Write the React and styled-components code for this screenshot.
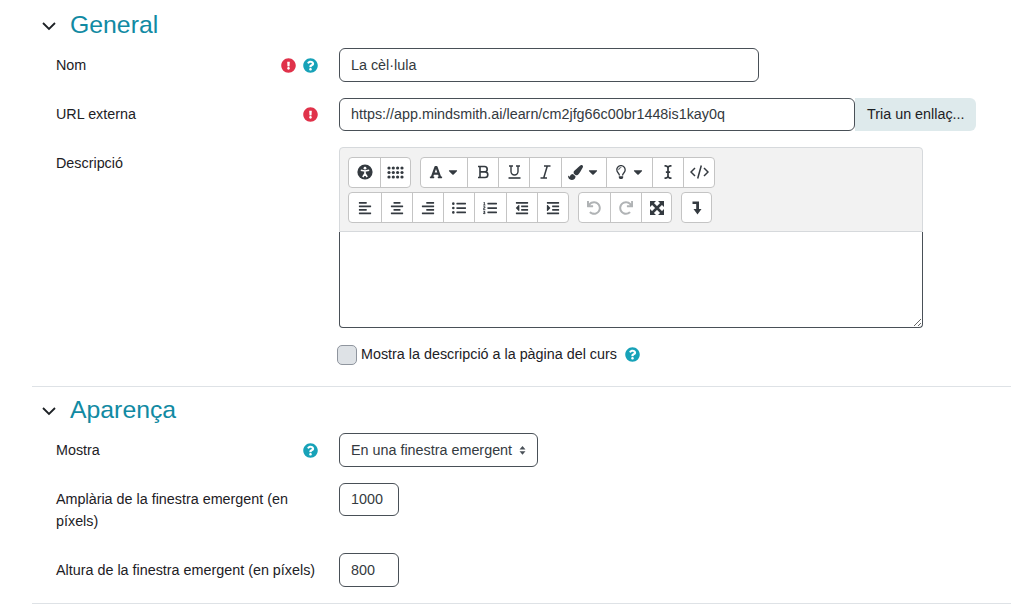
import styled, { createGlobalStyle } from 'styled-components';
import {
  FaFont,
  FaPaintBrush,
  FaRegLightbulb,
  FaICursor,
  FaAlignLeft,
  FaAlignCenter,
  FaAlignRight,
  FaListUl,
  FaListOl,
  FaOutdent,
  FaIndent,
  FaUndo,
  FaRedo,
  FaCaretDown,
  FaExclamationCircle,
  FaQuestionCircle,
} from 'react-icons/fa';

const GlobalStyle = createGlobalStyle`
  html, body {
    margin: 0;
    padding: 0;
    background: #fff;
    overflow: hidden;
  }
  body {
    font-family: "Liberation Sans", Arial, sans-serif;
    font-size: 14.35px;
    line-height: 21.6px;
    color: #1d2125;
  }
`;

const Required = () => (
  <RedIcon>
    <FaExclamationCircle />
  </RedIcon>
);

const Help = () => (
  <TealIcon>
    <FaQuestionCircle />
  </TealIcon>
);

const SectionChevron = () => (
  <Chevron viewBox="0 0 14 14">
    <path d="M1 4 L7 10 L13 4" />
  </Chevron>
);

const AccessIcon = () => (
  <svg width="16" height="16" viewBox="0 0 16 16">
    <circle cx="8" cy="8" r="7.6" fill="currentColor" />
    <circle cx="8" cy="4.2" r="1.4" fill="#fff" />
    <path d="M3.8 6.2 L8 7 L12.2 6.2 M8 7 V9.5 L5.8 13 M8 9.5 L10.2 13" fill="none" stroke="#fff" strokeWidth="1.6" />
  </svg>
);

const DotsIcon = () => (
  <svg width="17" height="13" viewBox="0 0 17 13" fill="currentColor">
    {[2, 6.5, 11].map((y) =>
      [2, 6.3, 10.6, 15].map((x) => <circle key={`${x}-${y}`} cx={x} cy={y} r="1.6" />)
    )}
  </svg>
);

const BoldIcon = () => (
  <svg width="13" height="14" viewBox="0 0 13 14" fill="none" stroke="currentColor" strokeWidth="1.6">
    <path d="M1 1.5 H7.5 A2.7 2.7 0 0 1 7.5 6.9 H3 M3 6.9 H8 A2.8 2.8 0 0 1 8 12.5 H1 M3 1.5 V12.5" />
  </svg>
);

const UnderlineIcon = () => (
  <svg width="13" height="14" viewBox="0 0 13 14" fill="none" stroke="currentColor" strokeWidth="1.4">
    <path d="M1 1 H5 M8 1 H12 M3 1 V6.5 A3.5 3.5 0 0 0 10 6.5 V1" />
    <path d="M0.5 13 H12.5" strokeWidth="1.6" />
  </svg>
);

const ItalicIcon = () => (
  <svg width="11" height="14" viewBox="0 0 11 14" fill="none" stroke="currentColor" strokeWidth="1.5">
    <path d="M4 1 H10.5 M0.5 13 H7 M7.3 1 L3.7 13" />
  </svg>
);

const CodeIcon = () => (
  <svg width="19" height="14" viewBox="0 0 19 14" fill="none" stroke="currentColor" strokeWidth="1.5">
    <path d="M5 3 L1 7 L5 11 M14 3 L18 7 L14 11 M11.3 0.5 L7.7 13.5" />
  </svg>
);

const ArrowsIcon = () => (
  <svg width="14" height="14" viewBox="0 0 14 14" fill="currentColor">
    <path d="M0 0 H6 L0 6 Z M14 0 V6 L8 0 Z M0 14 V8 L6 14 Z M14 14 H8 L14 8 Z" />
    <path d="M2 2 L12 12 M12 2 L2 12" stroke="currentColor" strokeWidth="2.6" />
  </svg>
);

const EnterIcon = () => (
  <svg width="10" height="14" viewBox="0 0 10 14" fill="currentColor">
    <path d="M0.5 0.5 H7 V8 H9.5 L5.5 13.5 L1.5 8 H4.2 V3 H0.5 Z" />
  </svg>
);

const App = () => {
  return (
    <Page>
      <GlobalStyle />
      <Section $top={6} $bottom={20.4}>
        <SectionHead $gap={5.25}>
          <SectionChevron />
          <Title>General</Title>
        </SectionHead>
        <Row>
          <Label>
            <LabelText>Nom</LabelText>
            <Icons>
              <Required />
              <Help />
            </Icons>
          </Label>
          <Input $width={420} defaultValue="La cèl·lula" />
        </Row>
        <Row>
          <Label>
            <LabelText>URL externa</LabelText>
            <Icons>
              <Required />
            </Icons>
          </Label>
          <InputGroup>
            <Input $width={516} defaultValue="https://app.mindsmith.ai/learn/cm2jfg66c00br1448is1kay0q" />
            <AddonButton>Tria un enllaç...</AddonButton>
          </InputGroup>
        </Row>
        <Row>
          <Label>
            <LabelText>Descripció</LabelText>
          </Label>
          <Editor>
            <Toolbar>
              <ToolRow>
                <ToolGroup $tool={30.6}>
                  <Tool><AccessIcon /></Tool>
                  <Tool><DotsIcon /></Tool>
                </ToolGroup>
                <ToolGroup $tool={31.25}>
                  <Tool $menu><FaFont size={14} /><FaCaretDown size={14} /></Tool>
                  <Tool><BoldIcon /></Tool>
                  <Tool><UnderlineIcon /></Tool>
                  <Tool><ItalicIcon /></Tool>
                  <Tool $menu><FaPaintBrush size={15} /><FaCaretDown size={14} /></Tool>
                  <Tool $menu><FaRegLightbulb size={14} /><FaCaretDown size={14} /></Tool>
                  <Tool><FaICursor size={14} /></Tool>
                  <Tool><CodeIcon /></Tool>
                </ToolGroup>
              </ToolRow>
              <ToolRow>
                <ToolGroup $tool={31.25}>
                  <Tool><FaAlignLeft size={14} /></Tool>
                  <Tool><FaAlignCenter size={14} /></Tool>
                  <Tool><FaAlignRight size={14} /></Tool>
                  <Tool><FaListUl size={14} /></Tool>
                  <Tool><FaListOl size={14} /></Tool>
                  <Tool><FaOutdent size={14} /></Tool>
                  <Tool><FaIndent size={14} /></Tool>
                </ToolGroup>
                <ToolGroup $tool={30.8}>
                  <Tool $disabled><FaUndo size={14} /></Tool>
                  <Tool $disabled><FaRedo size={14} /></Tool>
                  <Tool><ArrowsIcon /></Tool>
                </ToolGroup>
                <ToolGroup $tool={29}>
                  <Tool><EnterIcon /></Tool>
                </ToolGroup>
              </ToolRow>
            </Toolbar>
            <TextArea />
          </Editor>
        </Row>
        <CheckRow>
          <CheckBox type="checkbox" />
          <CheckLabel>Mostra la descripció a la pàgina del curs</CheckLabel>
          <Help />
        </CheckRow>
      </Section>
      <Section $top={4} $bottom={0}>
        <SectionHead $gap={5.4}>
          <SectionChevron />
          <Title>Aparença</Title>
        </SectionHead>
        <Row>
          <Label>
            <LabelText>Mostra</LabelText>
            <Icons>
              <Help />
            </Icons>
          </Label>
          <SelectBox>
            En una finestra emergent
            <SelectCaret viewBox="0 0 8 12">
              <path d="M4 1 L7.4 5 H0.6 Z M4 11 L0.6 7 H7.4 Z" />
            </SelectCaret>
          </SelectBox>
        </Row>
        <Row>
          <Label>
            <LabelText>Amplària de la finestra emergent (en píxels)</LabelText>
          </Label>
          <Input $width={60} defaultValue="1000" />
        </Row>
        <Row>
          <Label>
            <LabelText>Altura de la finestra emergent (en píxels)</LabelText>
          </Label>
          <Input $width={60} defaultValue="800" />
        </Row>
      </Section>
    </Page>
  );
};

export default App;

const Page = styled.div`
  width: 979px;
  margin-left: 32px;
  height: 606px;
  overflow: hidden;
`;

const Section = styled.section`
  padding: ${(p) => p.$top}px 0 ${(p) => p.$bottom}px;
  border-bottom: 1px solid #dee2e6;
`;

const SectionHead = styled.div`
  display: flex;
  align-items: center;
  height: 37px;
  margin-bottom: ${(p) => p.$gap}px;
`;

const Chevron = styled.svg`
  width: 14px;
  height: 14px;
  margin: 3px 14px 0 10px;
  fill: none;
  stroke: #1d2125;
  stroke-width: 1.8;
`;

const Title = styled.h3`
  margin: 0;
  font-size: 24.8px;
  font-weight: 400;
  line-height: 1.2;
  color: #118aa3;
`;

const Row = styled.div`
  display: flex;
  align-items: flex-start;
  padding-left: 24px;
  margin-bottom: 16px;
`;

const Label = styled.div`
  width: 283px;
  flex: none;
  display: flex;
  justify-content: space-between;
  padding: 6.3px 21px 5.1px 0;
  box-sizing: border-box;
`;

const LabelText = styled.span`
  display: block;
`;

const Icons = styled.span`
  display: flex;
  flex: none;
  align-items: center;
  gap: 7px;
  height: 21.6px;
`;

const RedIcon = styled.span`
  display: flex;
  color: #e0324a;
  font-size: 15px;
`;

const TealIcon = styled.span`
  display: flex;
  color: #17a2b8;
  font-size: 15px;
`;

const Input = styled.input`
  box-sizing: border-box;
  width: ${(p) => p.$width}px;
  height: 33.4px;
  padding: 0 11px;
  border: 1px solid #495057;
  border-radius: 6px;
  background: #fff;
  color: #343a40;
  font: inherit;
  outline: none;
`;

const InputGroup = styled.div`
  display: flex;
`;

const AddonButton = styled.button`
  height: 33.4px;
  padding: 0 11.5px 0 12px;
  border: none;
  border-radius: 0 6px 6px 0;
  background: #deeaec;
  color: #1d2125;
  font: inherit;
  white-space: nowrap;
`;

const Editor = styled.div`
  width: 584px;
`;

const Toolbar = styled.div`
  box-sizing: border-box;
  height: 85px;
  padding: 8.7px 8.3px 0;
  background: #f2f2f2;
  border: 1px solid #d6d9dc;
  border-radius: 4px 4px 0 0;
`;

const ToolRow = styled.div`
  display: flex;
  gap: 9px;
  margin-bottom: 4.5px;
`;

const ToolGroup = styled.div`
  --tool: ${(p) => p.$tool}px;
  display: flex;
  height: 31px;
  background: #fff;
  border: 1px solid #c4c4c4;
  border-radius: 4px;
  box-sizing: border-box;
`;

const Tool = styled.span`
  box-sizing: border-box;
  width: ${(p) => (p.$menu ? '45.5px' : 'var(--tool)')};
  display: flex;
  align-items: center;
  justify-content: center;
  gap: 3px;
  color: ${(p) => (p.$disabled ? '#b0b3b5' : '#343a40')};
  & + & {
    border-left: 1px solid #c4c4c4;
  }
`;

const TextArea = styled.textarea`
  display: block;
  box-sizing: border-box;
  width: 584px;
  height: 96px;
  padding: 6px;
  border: 1px solid #495057;
  border-top: none;
  border-radius: 0 0 4px 4px;
  outline: none;
  resize: vertical;
  background: #fff;
`;

const CheckRow = styled.div`
  display: flex;
  align-items: center;
  height: 21.6px;
  margin-left: 305px;
`;

const CheckBox = styled.input`
  appearance: none;
  box-sizing: border-box;
  width: 19.5px;
  height: 19.5px;
  margin: 0 4.5px 0 0;
  background: #dee2e6;
  border: 1px solid #8f959e;
  border-radius: 5px;
`;

const CheckLabel = styled.span`
  margin-right: 8px;
`;

const SelectBox = styled.div`
  position: relative;
  box-sizing: border-box;
  height: 33.4px;
  line-height: 32.4px;
  padding: 0 25px 0 11px;
  border: 1px solid #495057;
  border-radius: 6px;
  color: #343a40;
  white-space: nowrap;
`;

const SelectCaret = styled.svg`
  position: absolute;
  right: 11px;
  top: 11px;
  width: 7px;
  height: 10.5px;
  fill: #495057;
`;
